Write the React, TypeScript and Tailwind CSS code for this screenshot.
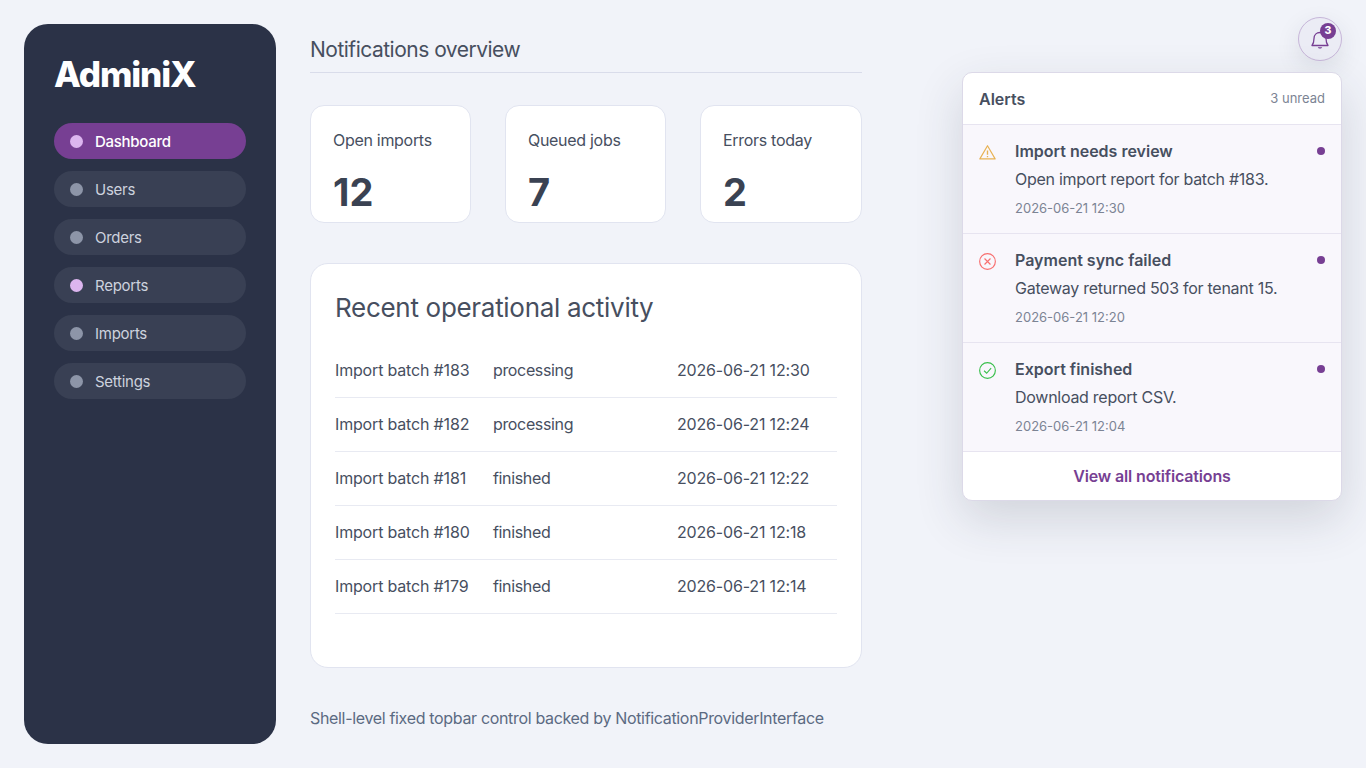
import React from "react";

const nav = [
  { label: "Dashboard", active: true, dot: "bg-[#dcb5ef]" },
  { label: "Users", dot: "bg-[#8d95a8]" },
  { label: "Orders", dot: "bg-[#8d95a8]" },
  { label: "Reports", dot: "bg-[#dcb5ef]" },
  { label: "Imports", dot: "bg-[#8d95a8]" },
  { label: "Settings", dot: "bg-[#8d95a8]" },
];
const stats = [
  ["Open imports", "12"],
  ["Queued jobs", "7"],
  ["Errors today", "2"],
];
const rows = [
  ["Import batch #183", "processing", "2026-06-21 12:30"],
  ["Import batch #182", "processing", "2026-06-21 12:24"],
  ["Import batch #181", "finished", "2026-06-21 12:22"],
  ["Import batch #180", "finished", "2026-06-21 12:18"],
  ["Import batch #179", "finished", "2026-06-21 12:14"],
];

const Warn = () => (
  <svg width="17" height="17" viewBox="0 0 16 16" fill="none" stroke="#e8b254" strokeWidth="1.1">
    <path d="M8 1.6 L15.2 14 H0.8 Z" strokeLinejoin="round" />
    <path d="M8 6 V10.2 M8 11.3 V12.5" strokeWidth="1.3" />
  </svg>
);
const Err = () => (
  <svg width="17" height="17" viewBox="0 0 16 16" fill="none" stroke="#f87171" strokeWidth="1.1">
    <circle cx="8" cy="8" r="7.4" />
    <path d="M5.2 5.2 L10.8 10.8 M10.8 5.2 L5.2 10.8" />
  </svg>
);
const Ok = () => (
  <svg width="17" height="17" viewBox="0 0 16 16" fill="none" stroke="#3cc04e" strokeWidth="1.1">
    <circle cx="8" cy="8" r="7.4" />
    <path d="M4.8 8.2 L7.2 10.6 L11.4 5.8" />
  </svg>
);

const alerts = [
  { icon: <Warn />, title: "Import needs review", body: "Open import report for batch #183.", time: "2026-06-21 12:30" },
  { icon: <Err />, title: "Payment sync failed", body: "Gateway returned 503 for tenant 15.", time: "2026-06-21 12:20" },
  { icon: <Ok />, title: "Export finished", body: "Download report CSV.", time: "2026-06-21 12:04" },
];

export default function App() {
  return (
    <div className="relative min-h-[768px] overflow-hidden bg-[#f1f3f9] font-['Inter',sans-serif] text-[#3d4554]">
      <div className="flex items-start p-6">
        <aside className="h-[720px] w-[252px] shrink-0 rounded-[24px] bg-[#2b3247] px-[30px] pt-[27px]">
          <div className="text-[35px] font-extrabold leading-[46px] tracking-[-1.1px] text-white">AdminiX</div>
          <nav className="mt-[26px] flex flex-col gap-3">
            {nav.map((n) => (
              <div
                key={n.label}
                className={`flex h-9 items-center rounded-[18px] pl-4 text-[15px] leading-[38px] tracking-[-0.27px] ${
                  n.active ? "bg-[#773f93] font-medium text-white" : "bg-[#394054] text-[#cdd2de]"
                }`}
              >
                <span className={`h-[13px] w-[13px] rounded-full ${n.dot}`} />
                <span className="ml-3 pt-[2px]">{n.label}</span>
              </div>
            ))}
          </nav>
        </aside>

        <main className="ml-[34px] w-[552px] shrink-0">
          <h2 className="h-[49px] border-b border-[#d9dcea] pt-[9px] text-[21px] font-normal leading-[34px] tracking-[-0.5px] text-[#474f5f]">
            Notifications overview
          </h2>
          <div className="mt-8 grid grid-cols-[161px_161px_162px] gap-[34px]">
            {stats.map(([l, v]) => (
              <div key={l} className="h-[118px] rounded-[14px] border border-[#e1e4f0] bg-white px-[22px] pt-[22px]">
                <div className="text-[16px] leading-[24px] tracking-[-0.3px] text-[#474f5f]">{l}</div>
                <div className="mt-[18px] text-[38px] font-bold leading-[44px] text-[#3a4252]">{v}</div>
              </div>
            ))}
          </div>
          <section className="mt-10 h-[405px] rounded-[18px] border border-[#e1e4f0] bg-white px-6 pt-[25px]">
            <h3 className="text-[26px] font-normal leading-[38px] tracking-[-0.3px] text-[#474f5f]">Recent operational activity</h3>
            <div className="mt-[17px]">
              {rows.map(([a, b, c]) => (
                <div key={a} className="flex h-[54px] items-center border-b border-[#e8eaf2] pb-[2px] text-[16px] tracking-[-0.17px] text-[#474f5f]">
                  <span className="w-[158px]">{a}</span>
                  <span className="w-[184px] tracking-[-0.35px]">{b}</span>
                  <span>{c}</span>
                </div>
              ))}
            </div>
          </section>
          <p className="mt-10 text-[16px] leading-[20px] tracking-[-0.33px] text-[#5b6a82]">
            Shell-level fixed topbar control backed by NotificationProviderInterface
          </p>
        </main>
      </div>

      <button className="absolute left-[1298px] top-[17px] flex h-11 w-11 items-center justify-center rounded-full border border-[#c7b6d9] bg-[#ebecf5] shadow-[0_8px_24px_rgba(43,50,71,0.10)]">
        <svg width="20" height="22" viewBox="0 0 20 22" fill="none" stroke="#773f93" strokeWidth="1.3">
          <path d="M2 17.5 C3.5 15.5 4 14 4 10.5 C4 7 6.5 4.5 10 4.5 C13.5 4.5 16 7 16 10.5 C16 14 16.5 15.5 18 17.5 Z" strokeLinejoin="round" />
          <path d="M7.8 19.2 H12.2 C11.8 21 8.2 21 7.8 19.2 Z" fill="#773f93" stroke="none" />
        </svg>
        <span className="absolute left-[21px] top-[5px] flex h-4 w-4 items-center justify-center rounded-full bg-[#773f93] text-[10.5px] font-extrabold text-white">
          3
        </span>
      </button>

      <div className="absolute left-[962px] top-[72px] w-[380px] overflow-hidden rounded-[10px] border border-[#dcd9e8] bg-white shadow-[0_18px_48px_rgba(43,50,71,0.16)]">
        <div className="flex h-[52px] items-center justify-between border-b border-[#e7e4f0] px-4">
          <span className="text-[16px] font-semibold text-[#474f5f]">Alerts</span>
          <span className="text-[13px] text-[#7c8494]">3 unread</span>
        </div>
        {alerts.map((a) => (
          <div key={a.title} className="flex h-[109px] border-b border-[#e7e4f0] bg-[#f9f7fc] pl-4 pr-4 pt-[15px]">
            <span className="mt-[4px] w-9 shrink-0">{a.icon}</span>
            <div className="flex-1">
              <div className="text-[16px] font-semibold leading-[22px] text-[#474f5f]">{a.title}</div>
              <div className="mt-[6px] text-[16px] leading-[22px] tracking-[-0.27px] text-[#474f5f]">{a.body}</div>
              <div className="mt-[9px] text-[13px] leading-[18px] text-[#7c8494]">{a.time}</div>
            </div>
            <span className="mt-[7px] h-2 w-2 rounded-full bg-[#773f93]" />
          </div>
        ))}
        <div className="flex h-[48px] items-center justify-center text-[16px] font-semibold tracking-[-0.15px] text-[#773f93]">
          View all notifications
        </div>
      </div>
    </div>
  );
}
